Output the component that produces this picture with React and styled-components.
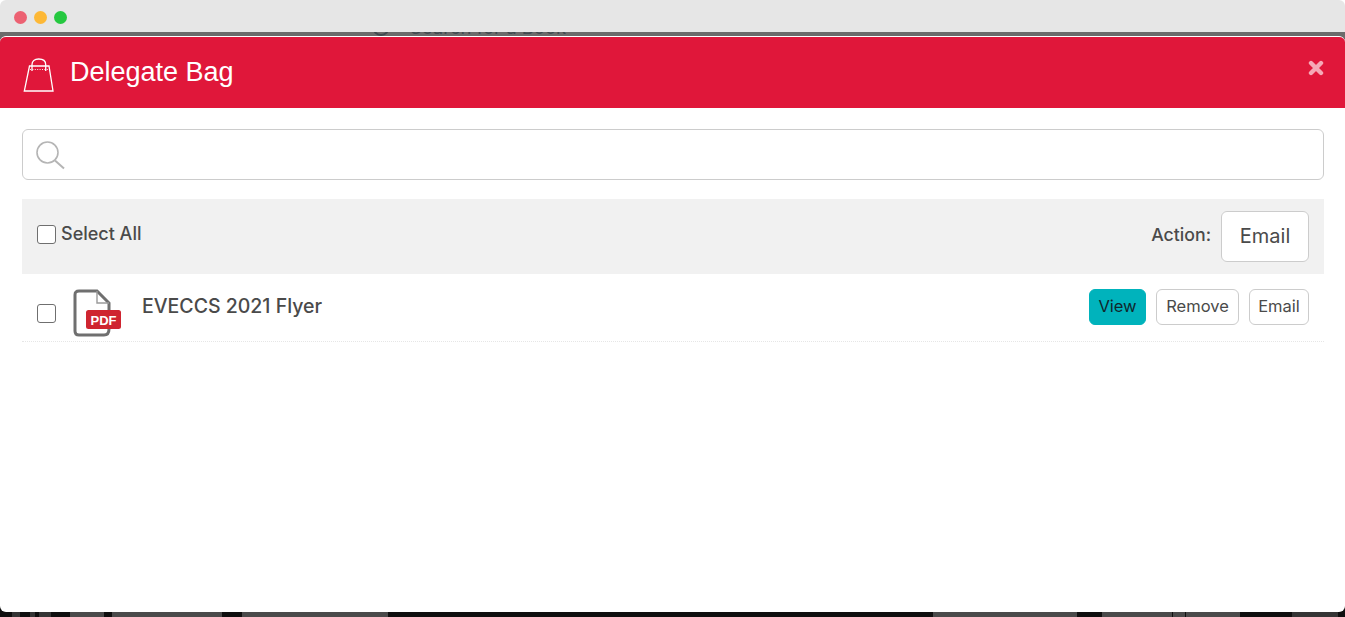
import styled, { createGlobalStyle } from "styled-components"

// ============================== Style  ==============================
const GlobalStyle = createGlobalStyle`
    html, body {
        margin: 0;
        padding: 0;
        height: 100%;
        background: #ffffff;
        overflow: hidden;
    }
    * {
        box-sizing: border-box;
    }
`

const Page = styled.div`
    width: 1345px;
    height: 617px;
    display: flex;
    flex-direction: column;
    overflow: hidden;
    font-family: "Inter", "Liberation Sans", sans-serif;
    color: #4a4a4a;
`

const WindowBar = styled.div`
    position: relative;
    z-index: 2;
    flex: 0 0 32px;
    display: flex;
    align-items: center;
    gap: 7px;
    padding: 2px 0 0 13.5px;
    background: #e6e6e6;
    border-radius: 6px 6px 0 0;
`

const Dot = styled.span`
    width: 13px;
    height: 13px;
    border-radius: 50%;
    background: ${props => props.color};
`

const Backdrop = styled.div`
    flex: 1;
    position: relative;
    display: flex;
    flex-direction: column;
    background: linear-gradient(#6b6b6b 0, #6b6b6b 60px, #0f0f0f 60px);
`

const BackdropSearch = styled.div`
    position: absolute;
    top: -16px;
    left: 372px;
    display: flex;
    align-items: center;
    gap: 20px;
    font-size: 18.5px;
    line-height: 22px;
    color: #3f4a50;
`

const BackdropFooter = styled.div`
    position: absolute;
    left: 0;
    right: 0;
    bottom: 0;
    height: 6px;
    display: flex;
    background: #0f0f0f;
`

const FooterBlock = styled.span`
    flex: 0 0 ${props => props.$w}px;
    margin-left: ${props => props.$gap}px;
    background: ${props => props.$dim ? "#353535" : "#4a4a4a"};
`

const Modal = styled.div`
    position: absolute;
    z-index: 1;
    top: 4px;
    left: 0;
    right: 0;
    bottom: 5px;
    display: flex;
    flex-direction: column;
    background: #ffffff;
    border-top: 1px solid #ffffff;
    border-radius: 6px;
    overflow: hidden;
`

const ModalHeader = styled.div`
    flex: 0 0 71px;
    position: relative;
    display: flex;
    align-items: center;
    gap: 16px;
    padding: 0 22px 0 22px;
    background: #e0173a;
    color: #ffffff;
`

const BagIcon = styled.svg`
    width: 32px;
    height: 34px;
    margin-top: 4px;
`

const ModalTitle = styled.h2`
    margin: -2px 0 0;
    font-family: "Liberation Sans", Arial, sans-serif;
    font-size: 27px;
    font-weight: 400;
    line-height: 30px;
`

const CloseIcon = styled.svg`
    position: absolute;
    top: 23px;
    right: 21px;
    width: 16px;
    height: 16px;
`

const ModalBody = styled.div`
    flex: 1;
    display: flex;
    flex-direction: column;
    padding: 21px 21px 0 22px;
`

const SearchBox = styled.div`
    height: 51px;
    display: flex;
    align-items: center;
    padding-left: 12px;
    border: 1px solid #cccccc;
    border-radius: 6px;
    background: #ffffff;
`

const Toolbar = styled.div`
    height: 75px;
    margin-top: 19px;
    display: flex;
    align-items: center;
    justify-content: space-between;
    padding: 0 15px;
    background: #f1f1f1;
`

const SelectAll = styled.label`
    display: flex;
    align-items: center;
    gap: 5px;
    margin-top: -4px;
    font-size: 18px;
    font-weight: 500;
    color: #4a4a4a;
    & > div {
        margin-top: -3px;
    }
`

const CheckBox = styled.span`
    display: inline-block;
    flex: 0 0 19px;
    width: 19px;
    height: 19px;
    margin-top: ${props => props.$top || 0}px;
    background: #ffffff;
    border: 1px solid #6f6f6f;
    border-radius: 3px;
`

const ActionGroup = styled.div`
    display: flex;
    align-items: center;
    gap: 10px;
`

const ActionLabel = styled.span`
    margin-top: -4px;
    font-size: 17.7px;
    font-weight: 500;
`

const BigButton = styled.div`
    width: 88px;
    height: 51px;
    display: flex;
    align-items: center;
    justify-content: center;
    padding-bottom: 2px;
    background: #ffffff;
    border: 1px solid #cccccc;
    border-radius: 6px;
    font-size: 20px;
    color: #4a4a4a;
`

const FileRow = styled.div`
    height: 68px;
    display: flex;
    align-items: center;
    padding: 0 15px;
    border-bottom: 1px dotted #e6e6e6;
`

const FileIcon = styled.svg`
    flex: 0 0 50px;
    width: 50px;
    height: 50px;
    margin: 11px 0 0 16.5px;
`

const FileName = styled.div`
    flex: 1;
    margin: -4px 0 0 19.5px;
    font-size: 19.5px;
    font-weight: 500;
    color: #4a4a4a;
`

const RowActions = styled.div`
    display: flex;
    align-items: center;
    gap: 10px;
    margin-top: -2px;
`

const SmallButton = styled.div`
    width: ${props => props.$w}px;
    height: 36px;
    display: flex;
    align-items: center;
    justify-content: center;
    padding-bottom: 2px;
    border: 1px solid ${props => props.$primary ? "#00b3bc" : "#cccccc"};
    border-radius: 6px;
    background: ${props => props.$primary ? "#00b3bc" : "#ffffff"};
    color: ${props => props.$primary ? "#10272c" : "#4a4a4a"};
    font-size: 16.5px;
`

const footerBlocks = [
    [8, 12, true], [5, 10, true], [12, 4, true], [34, 19], [110, 8], [146, 20],
    [144, 545], [70, 25], [12, 1], [54, 1], [46, 52, true],
]

export default function App() {
    return (
        <>
            <GlobalStyle />
            <Page>
                <WindowBar>
                    <Dot color="#ec6172" />
                    <Dot color="#fdb836" />
                    <Dot color="#25c840" />
                </WindowBar>
                <Backdrop>
                    <BackdropSearch>
                        <svg width="18" height="22" viewBox="0 0 18 22" fill="none" stroke="#3f4a50" strokeWidth="2">
                            <circle cx="9" cy="11" r="8" />
                        </svg>
                        Search for a Book
                    </BackdropSearch>
                    <BackdropFooter>
                        {footerBlocks.map(([w, gap, dim], i) => <FooterBlock key={i} $w={w} $gap={gap} $dim={dim} />)}
                    </BackdropFooter>
                    <Modal>
                        <ModalHeader>
                            <BagIcon viewBox="0 0 32 34" fill="none" stroke="#ffffff" strokeWidth="1.3">
                                <path d="M7.5 8H27L31 33H2.3Z" />
                                <path d="M10 13V6.5C10 3 12.5 1 16.7 1C21 1 23.7 3 23.7 6.5V13" />
                                <path d="M8 11.5H26.5" strokeWidth="0.9" strokeDasharray="1 1.4" />
                            </BagIcon>
                            <ModalTitle>Delegate Bag</ModalTitle>
                            <CloseIcon viewBox="0 0 16 16">
                                <path d="M3 3L13 13M13 3L3 13" stroke="#f5a9b6" strokeWidth="4.4" strokeLinecap="round" />
                            </CloseIcon>
                        </ModalHeader>
                        <ModalBody>
                            <SearchBox>
                                <svg width="30" height="30" viewBox="0 0 30 30" fill="none" stroke="#b5b5b5">
                                    <circle cx="12.5" cy="12.5" r="10.5" strokeWidth="1.6" />
                                    <path d="M20 20.5L29 28.5" strokeWidth="2" />
                                </svg>
                            </SearchBox>
                            <Toolbar>
                                <SelectAll><CheckBox /><div>Select All</div></SelectAll>
                                <ActionGroup>
                                    <ActionLabel>Action:</ActionLabel>
                                    <BigButton>Email</BigButton>
                                </ActionGroup>
                            </Toolbar>
                            <FileRow>
                                <CheckBox $top={11} />
                                <FileIcon viewBox="0 0 50 50" fill="none">
                                    <path d="M14 2H24L36 14V40C36 44 34 46 31 46H6C3 46 2 44 2 42V6C2 3 3 2 6 2Z" transform="translate(0 1)" stroke="#6f6f6f" strokeWidth="3" />
                                    <path d="M24 3V15H36" stroke="#9a9a9a" strokeWidth="1.4" />
                                    <rect x="13" y="22" width="35" height="19" rx="2.5" fill="#cf2530" />
                                    <text x="30.5" y="36.5" textAnchor="middle" fill="#ffffff" fontFamily="Liberation Sans, sans-serif" fontWeight="700" fontSize="13">PDF</text>
                                </FileIcon>
                                <FileName>EVECCS 2021 Flyer</FileName>
                                <RowActions>
                                    <SmallButton $primary $w={57}>View</SmallButton>
                                    <SmallButton $w={83}>Remove</SmallButton>
                                    <SmallButton $w={60}>Email</SmallButton>
                                </RowActions>
                            </FileRow>
                        </ModalBody>
                    </Modal>
                </Backdrop>
            </Page>
        </>
    )
}
